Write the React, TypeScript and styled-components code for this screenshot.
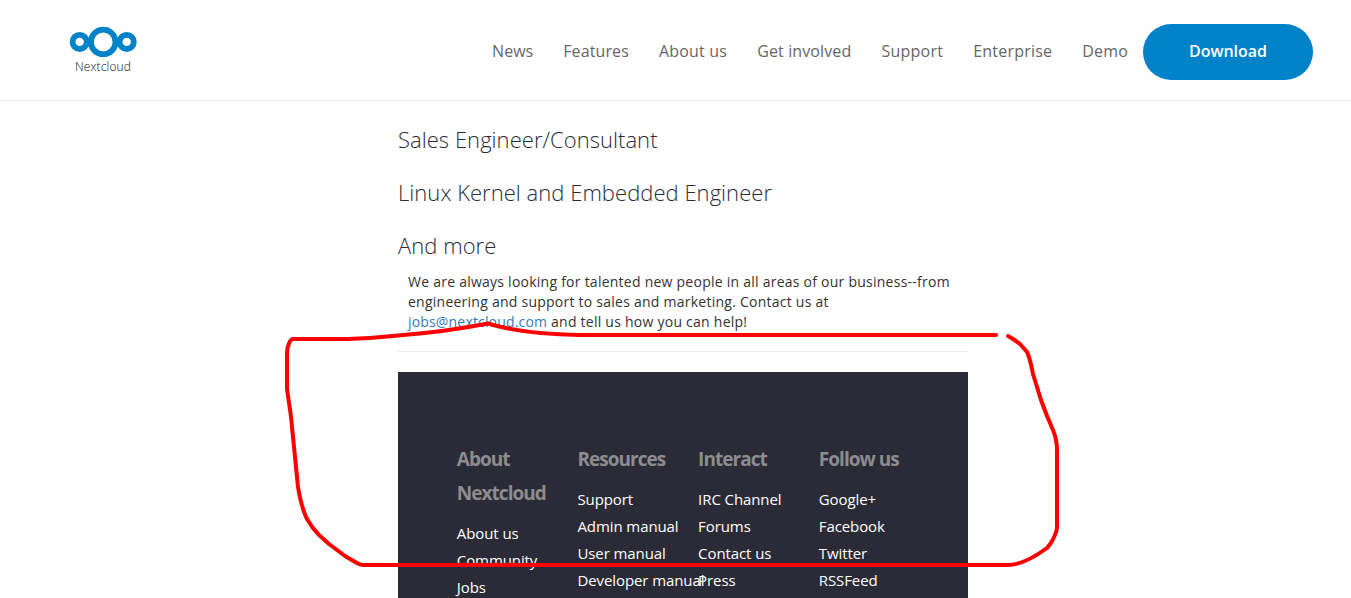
import React from 'react';
import styled, { createGlobalStyle } from 'styled-components';

const GlobalStyle = createGlobalStyle`
  *, *::before, *::after { box-sizing: border-box; }
  html, body { margin: 0; padding: 0; }
  body {
    background: #fff;
    color: #333;
    font-family: 'Open Sans', sans-serif;
    font-size: 14px;
    line-height: 20px;
    overflow: hidden;
  }
`;

const Page = styled.div`
  position: relative;
  height: 598px;
  overflow: hidden;
`;

const Header = styled.header`
  display: flex;
  align-items: center;
  justify-content: space-between;
  height: 101px;
  padding: 3px 38px 0 69px;
  border-bottom: 1px solid #eee;
  box-shadow: 0 1px 1px rgba(0, 0, 0, 0.03);
`;

const Logo = styled.svg`
  display: block;
  width: 70px;
  height: 50px;
  margin-bottom: 4px;
`;

const Nav = styled.nav`
  display: flex;
  align-items: center;
`;

const NavLink = styled.a<{ $tracking: number }>`
  padding: 0 15px 2px;
  color: #666;
  font-size: 16px;
  letter-spacing: ${({ $tracking }) => $tracking}px;
  line-height: 24px;
  white-space: nowrap;
`;

const DownloadButton = styled.a`
  display: flex;
  align-items: center;
  justify-content: center;
  width: 170px;
  height: 56px;
  padding-bottom: 2px;
  border-radius: 28px;
  background: #0082c9;
  color: #fff;
  font-size: 16px;
  font-weight: 600;
`;

const Content = styled.main`
  width: 570px;
  margin-left: 398px;
  padding-top: 22px;
`;

const JobTitle = styled.h3`
  margin: 0 0 21px;
  color: #2b2b37;
  font-size: 22px;
  font-weight: 300;
  letter-spacing: 0.04px;
  line-height: 32px;
`;

const Paragraph = styled.p`
  margin: -10px 0 19px;
  padding: 0 10px;
  letter-spacing: 0.245px;
`;

const MailLink = styled.a`
  color: #337ab7;
  letter-spacing: 0.17px;
`;

const Divider = styled.hr`
  height: 1px;
  margin: 0 0 20px;
  border: 0;
  background: #eee;
`;

const Footer = styled.footer`
  display: grid;
  grid-template-columns: repeat(4, 120.67px);
  height: 300px;
  padding: 70px 0 0 58.8px;
  background: #2b2b37;
`;

const ColumnTitle = styled.h4`
  margin: 0 0 10px;
  color: #8c8c8c;
  font-size: 19px;
  font-weight: 700;
  letter-spacing: -0.96px;
  line-height: 34px;
`;

const LinkList = styled.ul`
  margin: 0;
  padding: 0;
  list-style: none;
`;

const LinkItem = styled.li`
  color: #fff;
  font-size: 15px;
  letter-spacing: -0.09px;
  line-height: 27px;
  white-space: nowrap;
`;

const Annotation = styled.svg`
  position: absolute;
  top: 0;
  left: 0;
  pointer-events: none;
`;

const navItems = [
  { label: 'News', tracking: 0 },
  { label: 'Features', tracking: 0.12 },
  { label: 'About us', tracking: 0.2 },
  { label: 'Get involved', tracking: 0.12 },
  { label: 'Support', tracking: 0.26 },
  { label: 'Enterprise', tracking: 0.2 },
  { label: 'Demo', tracking: 0.2 },
];

const footerColumns = [
  { title: 'About Nextcloud', links: ['About us', 'Community', 'Jobs'] },
  { title: 'Resources', links: ['Support', 'Admin manual', 'User manual', 'Developer manual'] },
  { title: 'Interact', links: ['IRC Channel', 'Forums', 'Contact us', 'Press'] },
  { title: 'Follow us', links: ['Google+', 'Facebook', 'Twitter', 'RSSFeed'] },
];

export default function App() {
  return (
    <Page>
      <GlobalStyle />
      <Header>
        <Logo viewBox="69 25 70 50" role="img" aria-label="Nextcloud">
          <g fill="none" stroke="#0082c9" strokeWidth="5.8">
            <circle cx="103.2" cy="41.9" r="12.3" />
            <circle cx="79.7" cy="41.9" r="7.1" />
            <circle cx="126.7" cy="41.9" r="7.1" />
          </g>
          <text x="75" y="70.5" fill="#111" fontFamily="'Open Sans', sans-serif" fontWeight="300" fontSize="12" textLength="56">
            Nextcloud
          </text>
        </Logo>
        <Nav>
          {navItems.map((item) => (
            <NavLink key={item.label} $tracking={item.tracking}>
              {item.label}
            </NavLink>
          ))}
          <DownloadButton>Download</DownloadButton>
        </Nav>
      </Header>
      <Content>
        <JobTitle>Sales Engineer/Consultant</JobTitle>
        <JobTitle>Linux Kernel and Embedded Engineer</JobTitle>
        <JobTitle>And more</JobTitle>
        <Paragraph>
          We are always looking for talented new people in all areas of our business--from engineering and support to
          sales and marketing. Contact us at
          <br />
          <MailLink>jobs@nextcloud.com</MailLink> and tell us how you can help!
        </Paragraph>
        <Divider />
        <Footer>
          {footerColumns.map((column) => (
            <div key={column.title}>
              <ColumnTitle>{column.title}</ColumnTitle>
              <LinkList>
                {column.links.map((link) => (
                  <LinkItem key={link}>{link}</LinkItem>
                ))}
              </LinkList>
            </div>
          ))}
        </Footer>
      </Content>
      <Annotation width="1351" height="598" viewBox="0 0 1351 598" fill="none" stroke="#f00" strokeWidth="4" strokeLinecap="round" strokeLinejoin="round">
        <path d="M996 335 H580 C550 334.5 515 332 488 323.5 C460 329 430 333 398 335.5 C380 337.5 365 338.5 347 339 H293 C290 339 287 347 287 353 V388 C288 399 291 412 292 427 C294 446 296 468 298 487 C300 499 302 509 307 519 C311 526 314 530 319 535 L329 544 L337 550 L345 556 L356 562.5 Q360 565 363 565 H1008 C1022 565 1036 556 1047 548 C1052 543 1057 532 1057 527 V450 C1057 444 1055 435 1053 430 L1047 416 L1041 400 L1033 374 C1031 364 1030 358 1027 352 L1020 344 L1013 339 L1008 336" />
      </Annotation>
    </Page>
  );
}
